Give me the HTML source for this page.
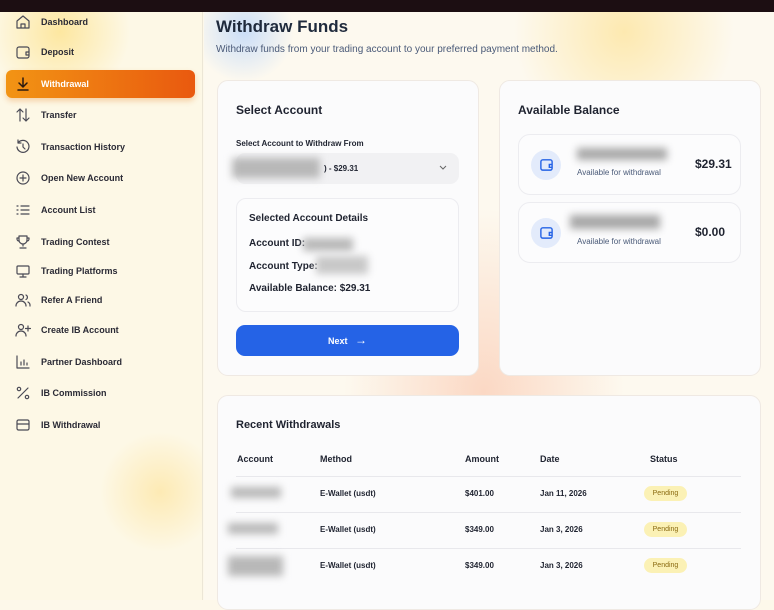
<!DOCTYPE html>
<html><head><meta charset="utf-8"><style>
*{box-sizing:border-box;margin:0;padding:0}
body{width:774px;height:600px;overflow:hidden;font-family:"Liberation Sans",sans-serif;background:#fdf8ea;position:relative;color:#1f2330}
.top{position:absolute;left:0;top:0;width:774px;height:12px;background:#1c0e12}
.side{position:absolute;left:0;top:12px;width:203px;height:588px;background:radial-gradient(circle at 60px 20px,#fde7a0 0,rgba(253,231,160,0) 70px),radial-gradient(circle at 160px 480px,#fdeab4 0,rgba(253,231,160,0) 60px),#fdf8e6;border-right:1px solid #ece6d6}
.it{position:absolute;left:0;height:20px;display:flex;align-items:center;font-size:9px;font-weight:bold;color:#2a2a35}
.it svg{position:absolute;left:15px;width:16px;height:16px;fill:none;stroke:#4a4a55;stroke-width:1.2;stroke-linecap:round;stroke-linejoin:round}
.it span{position:absolute;left:41px;white-space:nowrap}
.act{position:absolute;left:6px;top:70px;width:189px;height:28px;border-radius:6px;background:linear-gradient(90deg,#f29414,#e9590f);box-shadow:0 3px 6px rgba(230,120,20,.3)}
.main{position:absolute;left:204px;top:12px;width:570px;height:588px;background:radial-gradient(circle at 40px 20px,rgba(190,215,250,.8) 0,rgba(190,215,250,0) 50px),radial-gradient(circle at 420px 20px,#fde9b0 0,rgba(253,233,176,0) 110px),radial-gradient(ellipse at 280px 380px,#fbd8c4 0,rgba(251,216,196,0) 140px),#fdf9ef}
.card{position:absolute;background:#fbfbfc;border:1px solid #efe9e3;border-radius:11px}
h1{position:absolute;left:216px;top:17px;font-size:17px;color:#1f2a3c}
.sub{position:absolute;left:216px;top:44px;font-size:10px;color:#4a5a78}
.b{font-weight:bold}
.blur{position:absolute;background:#b8b8b8;filter:blur(4px)}
.pill{position:absolute;left:644px;width:43px;height:15px;border-radius:8px;background:#fbf1b5;color:#8a6a10;font-size:7px;text-align:center;line-height:15px}
.row{position:absolute;font-size:8px;font-weight:bold}
.line{position:absolute;left:236px;width:505px;height:1px;background:#e8e8ec}
</style></head><body>
<div class="top"></div>
<div class="side"></div>
<div class="act"></div>
<div class="it" style="top:12px"><svg viewBox="0 0 16 16"><path d="M2 7l6-5 6 5v7H2z M6 14v-4h4v4"/></svg><span>Dashboard</span></div>
<div class="it" style="top:42px"><svg viewBox="0 0 16 16"><rect x="2" y="3" width="12" height="11" rx="2"/><path d="M14 8h-3v3h3"/></svg><span>Deposit</span></div>
<div class="it" style="top:74px;color:#fff"><svg viewBox="0 0 16 16" style="stroke:#2a1a10;stroke-width:1.5"><path d="M8 2v9M4 7l4 4 4-4M3 14h10"/></svg><span>Withdrawal</span></div>
<div class="it" style="top:105px"><svg viewBox="0 0 16 16"><path d="M5 14V2M2 5l3-3 3 3M11 2v12M8 11l3 3 3-3"/></svg><span>Transfer</span></div>
<div class="it" style="top:137px"><svg viewBox="0 0 16 16"><path d="M3 4a6 6 0 1 1-1 4M3 1v3h3M8 5v3l2 2"/></svg><span>Transaction History</span></div>
<div class="it" style="top:168px"><svg viewBox="0 0 16 16"><circle cx="8" cy="8" r="6"/><path d="M8 5v6M5 8h6"/></svg><span>Open New Account</span></div>
<div class="it" style="top:200px"><svg viewBox="0 0 16 16"><path d="M2 4h1M6 4h8M2 8h1M6 8h8M2 12h1M6 12h8"/></svg><span>Account List</span></div>
<div class="it" style="top:232px"><svg viewBox="0 0 16 16"><path d="M4 2h8v4a4 4 0 0 1-8 0zM8 10v2M5 14h6M4 4H2v1a2 2 0 0 0 2 2M12 4h2v1a2 2 0 0 1-2 2"/></svg><span>Trading Contest</span></div>
<div class="it" style="top:261px"><svg viewBox="0 0 16 16"><rect x="2" y="3" width="12" height="8" rx="1"/><path d="M8 11v3M5 14h6"/></svg><span>Trading Platforms</span></div>
<div class="it" style="top:290px"><svg viewBox="0 0 16 16"><circle cx="6" cy="5" r="2.5"/><path d="M1 14a5 5 0 0 1 10 0M11 3a2.5 2.5 0 0 1 0 4.5M13 10a4 4 0 0 1 2 4"/></svg><span>Refer A Friend</span></div>
<div class="it" style="top:320px"><svg viewBox="0 0 16 16"><circle cx="6" cy="5" r="2.5"/><path d="M1 14a5 5 0 0 1 10 0M13 4v5M10.5 6.5h5"/></svg><span>Create IB Account</span></div>
<div class="it" style="top:352px"><svg viewBox="0 0 16 16"><path d="M2 2v12h12M6 11V8M9 11V6M12 11V9"/></svg><span>Partner Dashboard</span></div>
<div class="it" style="top:383px"><svg viewBox="0 0 16 16"><path d="M13 3L3 13"/><circle cx="4" cy="4" r="1.7"/><circle cx="12" cy="12" r="1.7"/></svg><span>IB Commission</span></div>
<div class="it" style="top:415px"><svg viewBox="0 0 16 16"><rect x="2" y="3" width="12" height="10" rx="1.5"/><path d="M2 7h12"/></svg><span>IB Withdrawal</span></div>

<div class="main"></div>
<h1>Withdraw Funds</h1>
<div class="sub">Withdraw funds from your trading account to your preferred payment method.</div>

<div class="card" style="left:217px;top:80px;width:262px;height:296px"></div>
<div style="position:absolute;left:236px;top:103px;font-size:12px" class="b">Select Account</div>
<div style="position:absolute;left:236px;top:139px;font-size:8px" class="b">Select Account to Withdraw From</div>
<div style="position:absolute;left:236px;top:153px;width:223px;height:31px;border-radius:9px;background:#f1f1f3"></div>
<div class="blur" style="left:232px;top:158px;width:88px;height:20px"></div>
<div style="position:absolute;left:324px;top:164px;font-size:8px" class="b">) - $29.31</div>
<svg style="position:absolute;left:438px;top:164px" width="10" height="8" viewBox="0 0 10 8"><path d="M2 2l3 3 3-3" fill="none" stroke="#666" stroke-width="1"/></svg>
<div style="position:absolute;left:236px;top:198px;width:223px;height:114px;border:1px solid #ececf0;border-radius:10px;background:#fcfcfd"></div>
<div style="position:absolute;left:249px;top:213px;font-size:10px" class="b">Selected Account Details</div>
<div style="position:absolute;left:249px;top:238px;font-size:10px" class="b">Account ID:</div>
<div class="blur" style="left:303px;top:238px;width:50px;height:13px"></div>
<div style="position:absolute;left:249px;top:261px;font-size:10px" class="b">Account Type:</div>
<div class="blur" style="left:316px;top:256px;width:52px;height:18px;background:#c8c8c8"></div>
<div style="position:absolute;left:249px;top:283px;font-size:10px" class="b">Available Balance: $29.31</div>
<div style="position:absolute;left:236px;top:325px;width:223px;height:31px;border-radius:9px;background:#2563e6;color:#fff;font-size:9px;font-weight:bold;text-align:center;line-height:31px">Next &nbsp;&nbsp;<span style="font-size:12px">→</span></div>

<div class="card" style="left:499px;top:80px;width:262px;height:296px"></div>
<div style="position:absolute;left:518px;top:103px;font-size:12px" class="b">Available Balance</div>
<div style="position:absolute;left:518px;top:134px;width:223px;height:61px;border:1px solid #ececf0;border-radius:12px;background:#fcfcfd"></div>
<div style="position:absolute;left:518px;top:202px;width:223px;height:61px;border:1px solid #ececf0;border-radius:12px;background:#fcfcfd"></div>
<div style="position:absolute;left:531px;top:150px;width:30px;height:30px;border-radius:50%;background:#e3ebfb"></div>
<div style="position:absolute;left:531px;top:218px;width:30px;height:30px;border-radius:50%;background:#e3ebfb"></div>
<svg style="position:absolute;left:539px;top:157px" width="15" height="15" viewBox="0 0 16 16"><rect x="2" y="3" width="12" height="11" rx="2" fill="none" stroke="#2563e6" stroke-width="1.5"/><path d="M14 8h-3v3h3" fill="none" stroke="#2563e6" stroke-width="1.5"/></svg>
<svg style="position:absolute;left:539px;top:225px" width="15" height="15" viewBox="0 0 16 16"><rect x="2" y="3" width="12" height="11" rx="2" fill="none" stroke="#2563e6" stroke-width="1.5"/><path d="M14 8h-3v3h3" fill="none" stroke="#2563e6" stroke-width="1.5"/></svg>
<div class="blur" style="left:577px;top:148px;width:90px;height:12px;background:#a8a8a8"></div>
<div class="blur" style="left:570px;top:215px;width:90px;height:14px;background:#a8a8a8"></div>
<div style="position:absolute;left:577px;top:168px;font-size:8px;color:#4a5a78">Available for withdrawal</div>
<div style="position:absolute;left:577px;top:237px;font-size:8px;color:#4a5a78">Available for withdrawal</div>
<div style="position:absolute;left:695px;top:157px;font-size:12px" class="b">$29.31</div>
<div style="position:absolute;left:695px;top:225px;font-size:12px" class="b">$0.00</div>

<div class="card" style="left:217px;top:395px;width:544px;height:215px"></div>
<div style="position:absolute;left:236px;top:419px;font-size:11px" class="b">Recent Withdrawals</div>
<div class="row" style="left:237px;top:454px;font-size:9px">Account</div>
<div class="row" style="left:320px;top:454px;font-size:9px">Method</div>
<div class="row" style="left:465px;top:454px;font-size:9px">Amount</div>
<div class="row" style="left:540px;top:454px;font-size:9px">Date</div>
<div class="row" style="left:650px;top:454px;font-size:9px">Status</div>
<div class="line" style="top:476px"></div><div class="line" style="top:512px"></div><div class="line" style="top:548px"></div>
<div class="blur" style="left:231px;top:487px;width:50px;height:11px"></div>
<div class="blur" style="left:228px;top:523px;width:50px;height:11px"></div>
<div class="blur" style="left:228px;top:556px;width:55px;height:20px"></div>
<div class="row" style="left:320px;top:489px">E-Wallet (usdt)</div><div class="row" style="left:465px;top:489px">$401.00</div><div class="row" style="left:540px;top:489px">Jan 11, 2026</div><div class="pill" style="top:486px">Pending</div>
<div class="row" style="left:320px;top:525px">E-Wallet (usdt)</div><div class="row" style="left:465px;top:525px">$349.00</div><div class="row" style="left:540px;top:525px">Jan 3, 2026</div><div class="pill" style="top:522px">Pending</div>
<div class="row" style="left:320px;top:561px">E-Wallet (usdt)</div><div class="row" style="left:465px;top:561px">$349.00</div><div class="row" style="left:540px;top:561px">Jan 3, 2026</div><div class="pill" style="top:558px">Pending</div>
</body></html>
